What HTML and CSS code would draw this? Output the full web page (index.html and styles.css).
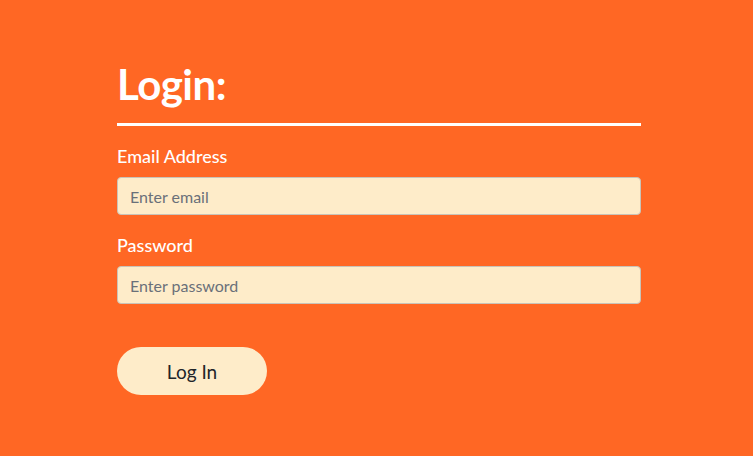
FILE: index.html
```html
<!DOCTYPE html>
<html lang="en">
<head>
<meta charset="utf-8">
<title>Login</title>
<link rel="stylesheet" href="styles.css">
</head>
<body>
<main class="page">
  <form class="login">
    <h1 class="title">Login:</h1>
    <hr class="rule">
    <div class="field">
      <label class="label" for="email">Email Address</label>
      <input class="input" id="email" type="email" placeholder="Enter email">
    </div>
    <div class="field">
      <label class="label" for="password">Password</label>
      <input class="input" id="password" type="password" placeholder="Enter password">
    </div>
    <button class="btn" type="button">Log In</button>
  </form>
</main>
</body>
</html>
```
FILE: styles.css
```css
html, body {
  margin: 0;
  padding: 0;
}
body {
  background: #ff6724;
  font-family: "Lato", "Inter", sans-serif;
  color: #fff;
  width: 753px;
  height: 456px;
  overflow: hidden;
}
.page {
  padding: 58px 0 0 117px;
}
.login {
  width: 524px;
  display: flex;
  flex-direction: column;
}
.title {
  margin: 0;
  font-size: 42px;
  font-weight: 700;
  line-height: 52px;
  letter-spacing: -0.5px;
}
.rule {
  margin: 13px 0 0;
  border: 0;
  height: 3px;
  background: #fff;
}
.field {
  display: flex;
  flex-direction: column;
  margin-top: 18px;
}
.label {
  font-size: 18px;
  line-height: 24px;
  font-weight: 500;
  margin-bottom: 9px;
}
.input {
  box-sizing: border-box;
  height: 38px;
  width: 100%;
  margin: 0;
  padding: 6px 12px;
  border: 1px solid #c9c3b8;
  border-radius: 4px;
  background: #feecc9;
  font-family: inherit;
  font-size: 16px;
  color: #212529;
  outline: none;
}
.input::placeholder {
  color: #6a7079;
}
.btn {
  margin-top: 43px;
  width: 150px;
  height: 48px;
  border: 0;
  border-radius: 24px;
  background: #feecc9;
  color: #212529;
  font-family: inherit;
  font-size: 19px;
  padding: 0;
}
```
